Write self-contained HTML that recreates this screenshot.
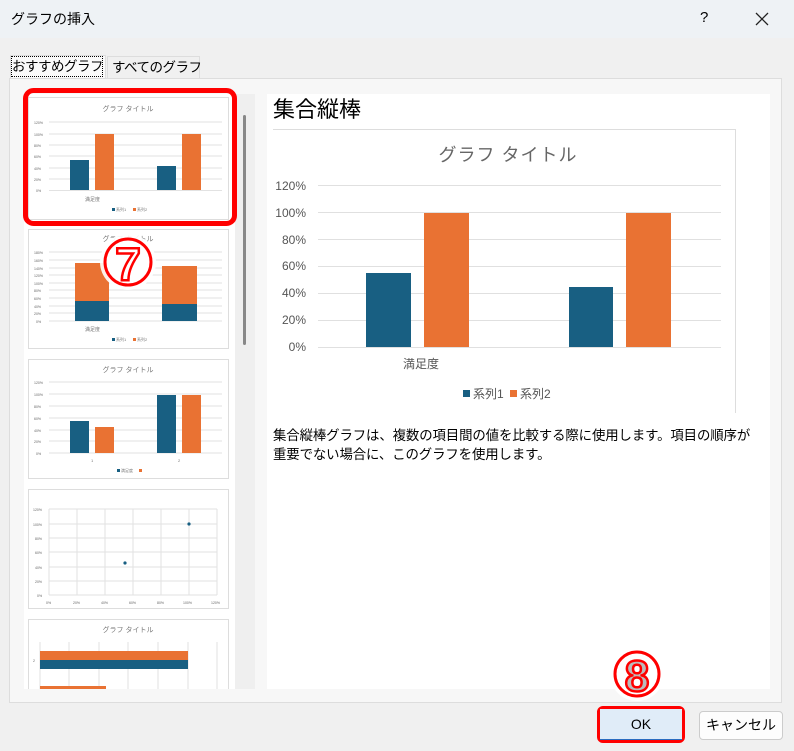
<!DOCTYPE html>
<html><head><meta charset="utf-8">
<style>
*{margin:0;padding:0;box-sizing:border-box}
body{width:794px;height:751px;overflow:hidden;background:#f0f0f0;font-family:"Liberation Sans","Noto Sans CJK JP",sans-serif;position:relative;color:#000}
.a{position:absolute}
svg text{font-family:"Liberation Sans","Noto Sans CJK JP",sans-serif}
</style></head><body>
<div class="a" style="left:0;top:0;width:794px;height:38px;background:#eef2f5"></div>
<div class="a" style="left:11px;top:9px;font-size:14px">グラフの挿入</div>
<div class="a" style="left:700px;top:9px;font-size:15px">?</div>
<svg class="a" style="left:754px;top:11px" width="16" height="16"><path d="M2 2L14 14M14 2L2 14" stroke="#222" stroke-width="1.3"/></svg>

<div class="a" style="left:10px;top:55px;width:96px;height:24px;background:#fafafa;border:1px solid #ddd;border-bottom:none"></div>
<div class="a" style="left:12px;top:57px;width:90px;font-size:13.5px;outline:1px dotted #000;line-height:19px;white-space:nowrap;letter-spacing:-0.5px">おすすめグラフ</div>
<div class="a" style="left:107px;top:56px;width:93px;height:22px;border:1px solid #ddd;border-bottom:none;background:#f0f0f0"></div>
<div class="a" style="left:112px;top:58px;font-size:13.5px;line-height:19px;white-space:nowrap;letter-spacing:-0.5px">すべてのグラフ</div>

<div class="a" style="left:9px;top:78px;width:773px;height:625px;background:#f7f7f7;border:1px solid #ddd"></div>
<div class="a" style="left:24px;top:94px;width:211px;height:595px;background:#fff"></div>
<div class="a" style="left:235px;top:94px;width:20px;height:595px;background:#efefef"></div>
<div class="a" style="left:243px;top:115px;width:3px;height:230px;background:#888;border-radius:2px"></div>
<div class="a" style="left:267px;top:94px;width:503px;height:595px;background:#fff"></div>

<svg class="a" style="left:0;top:0" width="794" height="751">
<g fill="#fff" stroke="#ddd">
<rect x="28.5" y="97.5" width="200" height="122"/>
<rect x="28.5" y="229.5" width="200" height="119"/>
<rect x="28.5" y="359.5" width="200" height="119"/>
<rect x="28.5" y="489.5" width="200" height="119"/>
<rect x="28.5" y="619.5" width="200" height="80"/>
</g>
<text x="128" y="111" font-size="7" fill="#777" text-anchor="middle">グラフ タイトル</text>
<g stroke="#e2e2e2"><path d="M49 122H222M49 134H222M49 145H222M49 156H222M49 168H222M49 179H222M49 190.5H222"/></g>
<g font-size="3.5" fill="#666"><text x="34" y="124">120%</text><text x="34" y="136">100%</text><text x="34" y="147">80%</text><text x="34" y="158">60%</text><text x="34" y="170">40%</text><text x="34" y="181">20%</text><text x="36" y="192">0%</text></g>
<rect x="70" y="160" width="19" height="30" fill="#185f82"/><rect x="95" y="134" width="19" height="56" fill="#e97233"/>
<rect x="157" y="166" width="19" height="24" fill="#185f82"/><rect x="182" y="134" width="19" height="56" fill="#e97233"/>
<text x="85" y="201" font-size="5" fill="#777">満足度</text>
<rect x="112" y="208" width="3" height="3" fill="#185f82"/><text x="116" y="211" font-size="4" fill="#777">系列1</text>
<rect x="133" y="208" width="3" height="3" fill="#e97233"/><text x="137" y="211" font-size="4" fill="#777">系列2</text>
<text x="128" y="241" font-size="7" fill="#777" text-anchor="middle">グラフ タイトル</text>
<g stroke="#e2e2e2"><path d="M49 252H222M49 260H222M49 268H222M49 275H222M49 283H222M49 290H222M49 298H222M49 306H222M49 313H222M49 321H222"/></g>
<g font-size="3.5" fill="#666"><text x="34" y="254">180%</text><text x="34" y="262">160%</text><text x="34" y="270">140%</text><text x="34" y="277">120%</text><text x="34" y="285">100%</text><text x="34" y="292">80%</text><text x="34" y="300">60%</text><text x="34" y="308">40%</text><text x="34" y="315">20%</text><text x="36" y="323">0%</text></g>
<rect x="75" y="301" width="34" height="20" fill="#185f82"/><rect x="75" y="263" width="34" height="38" fill="#e97233"/>
<rect x="162" y="304" width="35" height="17" fill="#185f82"/><rect x="162" y="266" width="35" height="38" fill="#e97233"/>
<text x="85" y="331" font-size="5" fill="#777">満足度</text>
<rect x="112" y="338" width="3" height="3" fill="#185f82"/><text x="116" y="341" font-size="4" fill="#777">系列1</text>
<rect x="133" y="338" width="3" height="3" fill="#e97233"/><text x="137" y="341" font-size="4" fill="#777">系列2</text>
<text x="128" y="372" font-size="7" fill="#777" text-anchor="middle">グラフ タイトル</text>
<g stroke="#e2e2e2"><path d="M49 382H222M49 394H222M49 406H222M49 418H222M49 430H222M49 441H222M49 453H222"/></g>
<g font-size="3.5" fill="#666"><text x="34" y="384">120%</text><text x="34" y="396">100%</text><text x="34" y="408">80%</text><text x="34" y="420">60%</text><text x="34" y="432">40%</text><text x="34" y="443">20%</text><text x="36" y="455">0%</text></g>
<rect x="70" y="421" width="19" height="32" fill="#185f82"/><rect x="95" y="427" width="19" height="26" fill="#e97233"/>
<rect x="157" y="395" width="19" height="58" fill="#185f82"/><rect x="182" y="395" width="19" height="58" fill="#e97233"/>
<text x="91" y="462" font-size="4" fill="#777">1</text><text x="178" y="462" font-size="4" fill="#777">2</text>
<rect x="117" y="469" width="3" height="3" fill="#185f82"/><text x="121" y="472" font-size="4" fill="#777">満足度</text><rect x="139" y="469" width="3" height="3" fill="#e97233"/>
<g stroke="#e2e2e2"><path d="M49 509H217M49 524H217M49 538H217M49 552H217M49 567H217M49 581H217M49 595H217M49 509V595M77 509V595M105 509V595M133 509V595M161 509V595M189 509V595M217 509V595"/></g>
<g font-size="3.5" fill="#666"><text x="33" y="511">120%</text><text x="33" y="526">100%</text><text x="35" y="540">80%</text><text x="35" y="554">60%</text><text x="35" y="569">40%</text><text x="35" y="583">20%</text><text x="37" y="597">0%</text></g>
<circle cx="125" cy="563" r="1.6" fill="#185f82"/><circle cx="189" cy="524" r="1.6" fill="#185f82"/>
<g font-size="3.5" fill="#666"><text x="46" y="604">0%</text><text x="73" y="604">20%</text><text x="101" y="604">40%</text><text x="129" y="604">60%</text><text x="157" y="604">80%</text><text x="183" y="604">100%</text><text x="211" y="604">120%</text></g>
<text x="128" y="632" font-size="7" fill="#777" text-anchor="middle">グラフ タイトル</text>
<g stroke="#e2e2e2"><path d="M40 642V689M69 642V689M99 642V689M128 642V689M158 642V689M188 642V689M217 642V689"/></g>
<rect x="40" y="651" width="148" height="9" fill="#e97233"/><rect x="40" y="660" width="148" height="9" fill="#185f82"/>
<text x="33" y="662" font-size="3.5" fill="#666">2</text>
<rect x="40" y="686" width="66" height="3" fill="#e97233"/>
<rect x="24" y="689" width="212" height="12" fill="#f7f7f7"/>

<rect x="25.5" y="90.5" width="209" height="133" rx="8" fill="none" stroke="#f00" stroke-width="5"/>

<text x="273" y="117" font-size="22">集合縦棒</text>
<path d="M273 129.5H735.5V413" fill="none" stroke="#ddd"/>
<text x="508" y="161" font-size="18" fill="#666" text-anchor="middle" letter-spacing="1">グラフ タイトル</text>
<g stroke="#e0e0e0"><path d="M318 185.5H721M318 212.5H721M318 239.5H721M318 266.5H721M318 293.5H721M318 320.5H721M318 347.5H721"/></g>
<g font-size="12" fill="#555" text-anchor="end"><text x="306" y="190">120%</text><text x="306" y="217">100%</text><text x="306" y="244">80%</text><text x="306" y="270">60%</text><text x="306" y="297">40%</text><text x="306" y="324">20%</text><text x="306" y="351">0%</text></g>
<rect x="366" y="273" width="45" height="74" fill="#185f82"/><rect x="424" y="213" width="45" height="134" fill="#e97233"/>
<rect x="569" y="287" width="44" height="60" fill="#185f82"/><rect x="626" y="213" width="45" height="134" fill="#e97233"/>
<text x="403" y="368" font-size="12" fill="#555">満足度</text>
<rect x="463" y="390" width="7" height="7" fill="#185f82"/><text x="473" y="398" font-size="12" fill="#555">系列1</text>
<rect x="510" y="390" width="7" height="7" fill="#e97233"/><text x="520" y="398" font-size="12" fill="#555">系列2</text>

<circle cx="128" cy="262" r="28" fill="#fff" opacity="0.9"/>
<circle cx="128" cy="262" r="23" fill="#fff" stroke="#f00" stroke-width="3"/>
<text x="128" y="280" font-size="46" font-weight="bold" fill="#fff" stroke="#f00" stroke-width="2.5" text-anchor="middle">7</text>
<circle cx="637" cy="674" r="27" fill="#fff" opacity="0.9"/>
<circle cx="637" cy="674" r="22" fill="#fff" stroke="#f00" stroke-width="3"/>
<text x="637" y="691" font-size="44" font-weight="bold" fill="#bbb" stroke="#f00" stroke-width="2.5" text-anchor="middle">8</text>
</svg>

<div class="a" style="left:273px;top:426px;font-size:13.4px;line-height:19px;width:488px;letter-spacing:-0.1px">集合縦棒グラフは、複数の項目間の値を比較する際に使用します。項目の順序が重要でない場合に、このグラフを使用します。</div>

<div class="a" style="left:597px;top:706px;width:88px;height:37px;border:4px solid #f00;border-radius:6px"></div>
<div class="a" style="left:600px;top:709px;width:82px;height:31px;background:#e0ecf8;border-bottom:1px solid #2a6cc0;text-align:center;font-size:14px;line-height:31px">OK</div>
<div class="a" style="left:699px;top:711px;width:84px;height:29px;background:#fdfdfd;border:1px solid #ccc;border-radius:4px;text-align:center;font-size:14px;line-height:27px">キャンセル</div>
</body></html>
